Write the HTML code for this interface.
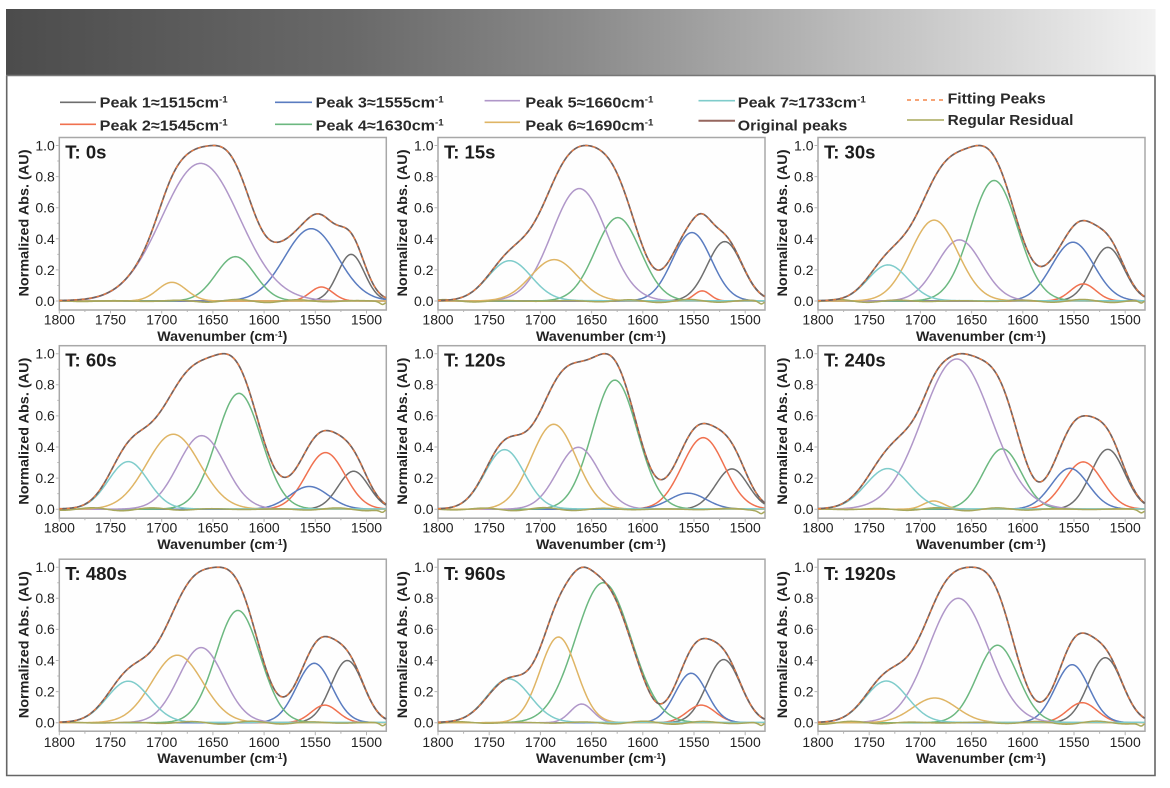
<!DOCTYPE html>
<html lang="en"><head><meta charset="utf-8"><title>Peak fitting panels</title>
<style>
html,body{margin:0;padding:0;background:#fff}
svg{display:block;filter:blur(.35px)}
text{font-family:"Liberation Sans",sans-serif;fill:#222}
.t{font-size:14px}
.x{text-anchor:middle}
.y{text-anchor:end}
.b{font-weight:bold;font-size:14px;text-anchor:middle}
.h{font-weight:bold;font-size:18.5px;fill:#1c1c1c}
.l{font-weight:bold;font-size:15px;fill:#2a2a2a}
.f{fill:#fefefe;stroke:#a8a8a8;stroke-width:1.5}
</style></head><body>
<svg xmlns="http://www.w3.org/2000/svg" width="1170" height="788" viewBox="0 0 1170 788">
<defs><linearGradient id="hd" x1="0" x2="1" y1="0" y2="0">
<stop offset="0" stop-color="#4c4c4c"/><stop offset=".3" stop-color="#696969"/><stop offset=".5" stop-color="#8a8a8a"/><stop offset=".75" stop-color="#bfbfbf"/><stop offset="1" stop-color="#f2f2f2"/></linearGradient></defs>
<rect width="1170" height="788" fill="#fff"/>
<rect x="6" y="9" width="1149.5" height="66" fill="url(#hd)"/>
<path d="M6.7 75.5V775.5H1155V75.5" fill="none" stroke="#666" stroke-width="1.6"/>
<path d="M6 75.5H1155.5" stroke="#777" stroke-width="1.4"/>

<g fill="none" stroke-width="1.6">
<path d="M60 102.3H96" stroke="#6e6e6e"/><path d="M60 124.3H96" stroke="#f0714f"/>
<path d="M275 102.3H312" stroke="#5a7cc0"/><path d="M275 124.3H312" stroke="#6cb880"/>
<path d="M484.6 100.7H520" stroke="#b097c9"/><path d="M484.6 122.3H520" stroke="#dfb565"/>
<path d="M698.5 100.7H735" stroke="#7fcccb"/><path d="M698.5 120.7H735" stroke="#96675f" stroke-width="2"/>
<path d="M907 100H944" stroke="#f4864a" stroke-dasharray="4 4"/><path d="M907 120H944" stroke="#a8a85c"/>
</g>
<text class="l" x="99.7" y="107.7" textLength="128" lengthAdjust="spacingAndGlyphs">Peak 1≈1515cm<tspan dy="-5" font-size="9">-1</tspan></text>
<text class="l" x="99.7" y="130.5" textLength="128" lengthAdjust="spacingAndGlyphs">Peak 2≈1545cm<tspan dy="-5" font-size="9">-1</tspan></text>
<text class="l" x="315.7" y="107.7" textLength="128" lengthAdjust="spacingAndGlyphs">Peak 3≈1555cm<tspan dy="-5" font-size="9">-1</tspan></text>
<text class="l" x="315.7" y="130.5" textLength="128" lengthAdjust="spacingAndGlyphs">Peak 4≈1630cm<tspan dy="-5" font-size="9">-1</tspan></text>
<text class="l" x="525.4" y="107.7" textLength="128" lengthAdjust="spacingAndGlyphs">Peak 5≈1660cm<tspan dy="-5" font-size="9">-1</tspan></text>
<text class="l" x="525.4" y="130.5" textLength="128" lengthAdjust="spacingAndGlyphs">Peak 6≈1690cm<tspan dy="-5" font-size="9">-1</tspan></text>
<text class="l" x="737.8" y="107.7" textLength="128" lengthAdjust="spacingAndGlyphs">Peak 7≈1733cm<tspan dy="-5" font-size="9">-1</tspan></text>
<text class="l" x="737.8" y="130.5" textLength="109.5" lengthAdjust="spacingAndGlyphs">Original peaks</text>
<text class="l" x="947.7" y="103.3" textLength="98" lengthAdjust="spacingAndGlyphs">Fitting Peaks</text>
<text class="l" x="947.7" y="125" textLength="125.7" lengthAdjust="spacingAndGlyphs">Regular Residual</text>

<g class="p" transform="translate(59.3,145.5)">
<rect class="f" x="0" y="-8" width="327" height="172.5"/>
<text class="t y" x="-4.5" y="5">1.0</text><text class="t y" x="-4.5" y="36">0.8</text><text class="t y" x="-4.5" y="67">0.6</text><text class="t y" x="-4.5" y="98.5">0.4</text><text class="t y" x="-4.5" y="129.5">0.2</text><text class="t y" x="-4.5" y="160.5">0.0</text>
<text class="t x" x="0" y="179">1800</text><text class="t x" x="51.2" y="179">1750</text><text class="t x" x="102.4" y="179">1700</text><text class="t x" x="153.6" y="179">1650</text><text class="t x" x="204.8" y="179">1600</text><text class="t x" x="256" y="179">1550</text><text class="t x" x="307.2" y="179">1500</text>
<text class="b" x="163" y="195.5" textLength="130" lengthAdjust="spacingAndGlyphs">Wavenumber (cm<tspan dy="-4" font-size="8.5">-1</tspan><tspan dy="4">)</tspan></text>
<text class="b" transform="translate(-31,77.5) rotate(-90)" textLength="147" lengthAdjust="spacingAndGlyphs">Normalized Abs. (AU)</text>
<text class="h" x="6" y="13">T: 0s</text>
</g>

<g class="p" transform="translate(438,145.5)">
<rect class="f" x="0" y="-8" width="327" height="172.5"/>
<text class="t y" x="-4.5" y="5">1.0</text><text class="t y" x="-4.5" y="36">0.8</text><text class="t y" x="-4.5" y="67">0.6</text><text class="t y" x="-4.5" y="98.5">0.4</text><text class="t y" x="-4.5" y="129.5">0.2</text><text class="t y" x="-4.5" y="160.5">0.0</text>
<text class="t x" x="0" y="179">1800</text><text class="t x" x="51.2" y="179">1750</text><text class="t x" x="102.4" y="179">1700</text><text class="t x" x="153.6" y="179">1650</text><text class="t x" x="204.8" y="179">1600</text><text class="t x" x="256" y="179">1550</text><text class="t x" x="307.2" y="179">1500</text>
<text class="b" x="163" y="195.5" textLength="130" lengthAdjust="spacingAndGlyphs">Wavenumber (cm<tspan dy="-4" font-size="8.5">-1</tspan><tspan dy="4">)</tspan></text>
<text class="b" transform="translate(-31,77.5) rotate(-90)" textLength="147" lengthAdjust="spacingAndGlyphs">Normalized Abs. (AU)</text>
<text class="h" x="6" y="13">T: 15s</text>
</g>

<g class="p" transform="translate(818,145.5)">
<rect class="f" x="0" y="-8" width="327" height="172.5"/>
<text class="t y" x="-4.5" y="5">1.0</text><text class="t y" x="-4.5" y="36">0.8</text><text class="t y" x="-4.5" y="67">0.6</text><text class="t y" x="-4.5" y="98.5">0.4</text><text class="t y" x="-4.5" y="129.5">0.2</text><text class="t y" x="-4.5" y="160.5">0.0</text>
<text class="t x" x="0" y="179">1800</text><text class="t x" x="51.2" y="179">1750</text><text class="t x" x="102.4" y="179">1700</text><text class="t x" x="153.6" y="179">1650</text><text class="t x" x="204.8" y="179">1600</text><text class="t x" x="256" y="179">1550</text><text class="t x" x="307.2" y="179">1500</text>
<text class="b" x="163" y="195.5" textLength="130" lengthAdjust="spacingAndGlyphs">Wavenumber (cm<tspan dy="-4" font-size="8.5">-1</tspan><tspan dy="4">)</tspan></text>
<text class="b" transform="translate(-31,77.5) rotate(-90)" textLength="147" lengthAdjust="spacingAndGlyphs">Normalized Abs. (AU)</text>
<text class="h" x="6" y="13">T: 30s</text>
</g>

<g class="p" transform="translate(59.3,353.7)">
<rect class="f" x="0" y="-8" width="327" height="172.5"/>
<text class="t y" x="-4.5" y="5">1.0</text><text class="t y" x="-4.5" y="36">0.8</text><text class="t y" x="-4.5" y="67">0.6</text><text class="t y" x="-4.5" y="98.5">0.4</text><text class="t y" x="-4.5" y="129.5">0.2</text><text class="t y" x="-4.5" y="160.5">0.0</text>
<text class="t x" x="0" y="179">1800</text><text class="t x" x="51.2" y="179">1750</text><text class="t x" x="102.4" y="179">1700</text><text class="t x" x="153.6" y="179">1650</text><text class="t x" x="204.8" y="179">1600</text><text class="t x" x="256" y="179">1550</text><text class="t x" x="307.2" y="179">1500</text>
<text class="b" x="163" y="195.5" textLength="130" lengthAdjust="spacingAndGlyphs">Wavenumber (cm<tspan dy="-4" font-size="8.5">-1</tspan><tspan dy="4">)</tspan></text>
<text class="b" transform="translate(-31,77.5) rotate(-90)" textLength="147" lengthAdjust="spacingAndGlyphs">Normalized Abs. (AU)</text>
<text class="h" x="6" y="13">T: 60s</text>
</g>

<g class="p" transform="translate(438,353.7)">
<rect class="f" x="0" y="-8" width="327" height="172.5"/>
<text class="t y" x="-4.5" y="5">1.0</text><text class="t y" x="-4.5" y="36">0.8</text><text class="t y" x="-4.5" y="67">0.6</text><text class="t y" x="-4.5" y="98.5">0.4</text><text class="t y" x="-4.5" y="129.5">0.2</text><text class="t y" x="-4.5" y="160.5">0.0</text>
<text class="t x" x="0" y="179">1800</text><text class="t x" x="51.2" y="179">1750</text><text class="t x" x="102.4" y="179">1700</text><text class="t x" x="153.6" y="179">1650</text><text class="t x" x="204.8" y="179">1600</text><text class="t x" x="256" y="179">1550</text><text class="t x" x="307.2" y="179">1500</text>
<text class="b" x="163" y="195.5" textLength="130" lengthAdjust="spacingAndGlyphs">Wavenumber (cm<tspan dy="-4" font-size="8.5">-1</tspan><tspan dy="4">)</tspan></text>
<text class="b" transform="translate(-31,77.5) rotate(-90)" textLength="147" lengthAdjust="spacingAndGlyphs">Normalized Abs. (AU)</text>
<text class="h" x="6" y="13">T: 120s</text>
</g>

<g class="p" transform="translate(818,353.7)">
<rect class="f" x="0" y="-8" width="327" height="172.5"/>
<text class="t y" x="-4.5" y="5">1.0</text><text class="t y" x="-4.5" y="36">0.8</text><text class="t y" x="-4.5" y="67">0.6</text><text class="t y" x="-4.5" y="98.5">0.4</text><text class="t y" x="-4.5" y="129.5">0.2</text><text class="t y" x="-4.5" y="160.5">0.0</text>
<text class="t x" x="0" y="179">1800</text><text class="t x" x="51.2" y="179">1750</text><text class="t x" x="102.4" y="179">1700</text><text class="t x" x="153.6" y="179">1650</text><text class="t x" x="204.8" y="179">1600</text><text class="t x" x="256" y="179">1550</text><text class="t x" x="307.2" y="179">1500</text>
<text class="b" x="163" y="195.5" textLength="130" lengthAdjust="spacingAndGlyphs">Wavenumber (cm<tspan dy="-4" font-size="8.5">-1</tspan><tspan dy="4">)</tspan></text>
<text class="b" transform="translate(-31,77.5) rotate(-90)" textLength="147" lengthAdjust="spacingAndGlyphs">Normalized Abs. (AU)</text>
<text class="h" x="6" y="13">T: 240s</text>
</g>

<g class="p" transform="translate(59.3,567.2)">
<rect class="f" x="0" y="-8" width="327" height="172"/>
<text class="t y" x="-4.5" y="5">1.0</text><text class="t y" x="-4.5" y="36">0.8</text><text class="t y" x="-4.5" y="67">0.6</text><text class="t y" x="-4.5" y="98.5">0.4</text><text class="t y" x="-4.5" y="129.5">0.2</text><text class="t y" x="-4.5" y="160.5">0.0</text>
<text class="t x" x="0" y="180">1800</text><text class="t x" x="51.2" y="180">1750</text><text class="t x" x="102.4" y="180">1700</text><text class="t x" x="153.6" y="180">1650</text><text class="t x" x="204.8" y="180">1600</text><text class="t x" x="256" y="180">1550</text><text class="t x" x="307.2" y="180">1500</text>
<text class="b" x="163" y="196" textLength="130" lengthAdjust="spacingAndGlyphs">Wavenumber (cm<tspan dy="-4" font-size="8.5">-1</tspan><tspan dy="4">)</tspan></text>
<text class="b" transform="translate(-31,77.5) rotate(-90)" textLength="147" lengthAdjust="spacingAndGlyphs">Normalized Abs. (AU)</text>
<text class="h" x="6" y="13">T: 480s</text>
</g>

<g class="p" transform="translate(438,567.2)">
<rect class="f" x="0" y="-8" width="327" height="172"/>
<text class="t y" x="-4.5" y="5">1.0</text><text class="t y" x="-4.5" y="36">0.8</text><text class="t y" x="-4.5" y="67">0.6</text><text class="t y" x="-4.5" y="98.5">0.4</text><text class="t y" x="-4.5" y="129.5">0.2</text><text class="t y" x="-4.5" y="160.5">0.0</text>
<text class="t x" x="0" y="180">1800</text><text class="t x" x="51.2" y="180">1750</text><text class="t x" x="102.4" y="180">1700</text><text class="t x" x="153.6" y="180">1650</text><text class="t x" x="204.8" y="180">1600</text><text class="t x" x="256" y="180">1550</text><text class="t x" x="307.2" y="180">1500</text>
<text class="b" x="163" y="196" textLength="130" lengthAdjust="spacingAndGlyphs">Wavenumber (cm<tspan dy="-4" font-size="8.5">-1</tspan><tspan dy="4">)</tspan></text>
<text class="b" transform="translate(-31,77.5) rotate(-90)" textLength="147" lengthAdjust="spacingAndGlyphs">Normalized Abs. (AU)</text>
<text class="h" x="6" y="13">T: 960s</text>
</g>

<g class="p" transform="translate(818,567.2)">
<rect class="f" x="0" y="-8" width="327" height="172"/>
<text class="t y" x="-4.5" y="5">1.0</text><text class="t y" x="-4.5" y="36">0.8</text><text class="t y" x="-4.5" y="67">0.6</text><text class="t y" x="-4.5" y="98.5">0.4</text><text class="t y" x="-4.5" y="129.5">0.2</text><text class="t y" x="-4.5" y="160.5">0.0</text>
<text class="t x" x="0" y="180">1800</text><text class="t x" x="51.2" y="180">1750</text><text class="t x" x="102.4" y="180">1700</text><text class="t x" x="153.6" y="180">1650</text><text class="t x" x="204.8" y="180">1600</text><text class="t x" x="256" y="180">1550</text><text class="t x" x="307.2" y="180">1500</text>
<text class="b" x="163" y="196" textLength="130" lengthAdjust="spacingAndGlyphs">Wavenumber (cm<tspan dy="-4" font-size="8.5">-1</tspan><tspan dy="4">)</tspan></text>
<text class="b" transform="translate(-31,77.5) rotate(-90)" textLength="147" lengthAdjust="spacingAndGlyphs">Normalized Abs. (AU)</text>
<text class="h" x="6" y="13">T: 1920s</text>
</g>
</svg>
<script>
(function(){
var NS="http://www.w3.org/2000/svg";
var C=["#6e6e6e","#f0714f","#5a7cc0","#6cb880","#b097c9","#dfb565","#7fcccb"];
/* order: gray, red, blue, green, purple, yellow, cyan : [amp, centre, sigma] */
var D=[
[[.30,1515,13],[.09,1544,11],[.465,1554,26],[.285,1628,19],[.885,1662,38],[.12,1690,14],[0,1733,20]],
[[.382,1520,17],[.065,1542,8],[.44,1552,19],[.536,1624.4,22],[.723,1662,26.8],[.266,1686.6,22.7],[.257,1730,21]],
[[.345,1517,15.8],[.11,1541,12.4],[.378,1551,20.6],[.775,1628,23],[.393,1662,22],[.52,1686.6,23],[.23,1731.6,19.5]],
[[.244,1512.6,15],[.364,1540,19],[.146,1556,19],[.745,1624.6,22],[.473,1661,23],[.482,1688.7,26],[.304,1732.7,19.3]],
[[.259,1513,15.8],[.46,1541,20.6],[.103,1556,18],[.83,1627.3,22],[.398,1663,20.6],[.546,1687,22],[.381,1735,19.3]],
[[.385,1517,16.5],[.304,1541,18.6],[.263,1554,18],[.388,1620,18.6],[.966,1664.5,33.7],[.053,1687,10],[.259,1732,21.3]],
[[.40,1518.8,15.8],[.113,1540.8,13],[.382,1551,17.3],[.722,1625.6,21.5],[.483,1661.5,22],[.434,1684.8,24.7],[.265,1732.7,20.6]],
[[.406,1521,16.5],[.113,1543,13.8],[.318,1552.8,15.5],[.90,1638.6,27],[.12,1659.7,11],[.551,1682.4,18],[.28,1731,21]],
[[.418,1519.4,16.5],[.129,1542,14.5],[.373,1551.8,16.5],[.498,1624.7,20],[.80,1663,29],[.159,1686,21.5],[.266,1733.2,20.6]]
];
/* brown-curve-only corrections so the envelope follows the reference */
var E=[
[[-.02,1518,10],[.035,1668,12],[.015,1587,10]],
[[-.08,1530,14],[-.02,1587,10]],
[[-.055,1530,14],[-.01,1587,10]],
[[-.012,1530,14]],
[[-.052,1530,14],[-.015,1587,10]],
[[-.06,1530,14],[-.03,1587,10]],
[[-.046,1530,14],[-.01,1587,10]],
[[-.01,1530,14],[-.04,1587,10]],
[[-.045,1530,14],[-.01,1587,10]]
];
var S=155.5,K=1.024;
function X(w){return (1800-w)*K}
function Y(v){return S*(1-v)}
function mk(d,st,sw,da){var p=document.createElementNS(NS,"path");p.setAttribute("d",d);p.setAttribute("fill","none");p.setAttribute("stroke",st);p.setAttribute("stroke-width",sw);p.setAttribute("stroke-linejoin","round");if(da)p.setAttribute("stroke-dasharray",da);return p}
function line(f){var d="";for(var w=1800;w>=1481;w-=1){d+=(d?"L":"M")+X(w).toFixed(2)+" "+Y(f(w)).toFixed(2)}return d}
function G(p,w){var t=(w-p[1])/p[2];return p[0]*Math.exp(-.5*t*t)}
var ps=document.querySelectorAll(".p");
for(var i=0;i<ps.length;i++){(function(g,P,Q,i){
 var ticks="";
 for(var k=0;k<=12;k++){var tx=k*25.6;ticks+="M"+tx+" "+(S+9)+"v"+(k%2?2:3.5)}
 for(var v=0;v<=10;v++){var ty=S*v/10;ticks+="M0 "+ty+"h"+(v%2?-2:-3.5)}
 g.appendChild(mk(ticks,"#b5b5b5",1));
 var raw=function(w){var s=.002;P.forEach(function(p){s+=G(p,w)});Q.forEach(function(p){s+=G(p,w)});return s};
 var m=0,w;for(w=1800;w>=1600;w--){var s0=raw(w);if(s0>m)m=s0}
 /* normalise the amide-I region to 1.0, blending out before the amide-II hump */
 var sum=function(w){var t=Math.max(0,Math.min(1,(w-1570)/30));t=t*t*(3-2*t);return raw(w)*(1+(1/m-1)*t)};
 var res=function(w){return .01*Math.sin(w/9.5+i*1.3)*(.6+.4*Math.sin(w/41+i))-.034*Math.exp(-Math.pow((w-1481)/6,2))+.024*Math.exp(-Math.pow((w-1481)/2.5,2))};
 P.forEach(function(p,j){if(p[0]===0)return;g.appendChild(mk(line(function(w){return G(p,w)+(j===6?.002:0)}),C[j],1.5))});
 g.appendChild(mk(line(res),"#a8a85c",1.5));
 g.appendChild(mk(line(sum),"#76625e",1.7));
 g.appendChild(mk(line(sum),"#f07a3c",1.2,"3 4.5"));
})(ps[i],D[i],E[i],i)}
})();
</script>
</body></html>
